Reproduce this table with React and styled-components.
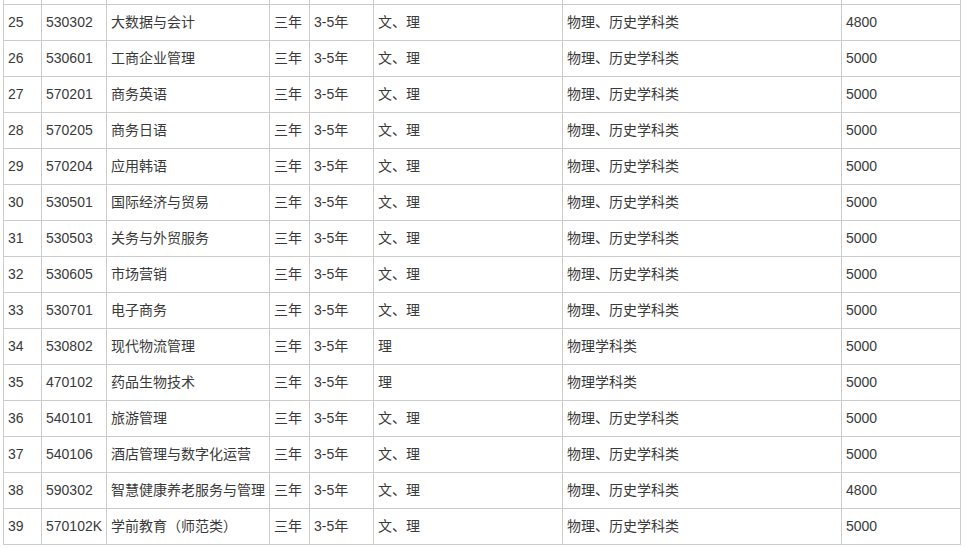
import React from 'react';
import styled, { createGlobalStyle } from 'styled-components';

const GlobalStyle = createGlobalStyle`
  html, body {
    margin: 0;
    padding: 0;
    background: #fff;
  }
  body {
    font-family: "Liberation Sans", "Noto Sans CJK SC", sans-serif;
  }
`;

// clips the row that runs off the top of the screenshot
const Viewport = styled.div`
  width: 966px;
  height: 548px;
  overflow: hidden;
  padding-left: 3px;
  box-sizing: border-box;
`;

const Table = styled.table`
  border-collapse: collapse;
  table-layout: fixed;
  width: 957px;
  margin-top: -32px;
  color: #3a3a3a;
  font-size: 14px;
`;

const Row = styled.tr`
  height: 36px;
`;

const Cell = styled.td`
  border: 1px solid #ccc;
  padding: 0 4px 2px;
  line-height: 20px;
  white-space: nowrap;
  overflow: hidden;
  vertical-align: middle;
`;

const widths = [38, 65, 163, 40, 64, 189, 279, 119];

const rows = [
  ['', '', '', '', '', '', '', ''],
  ['25', '530302', '大数据与会计', '三年', '3-5年', '文、理', '物理、历史学科类', '4800'],
  ['26', '530601', '工商企业管理', '三年', '3-5年', '文、理', '物理、历史学科类', '5000'],
  ['27', '570201', '商务英语', '三年', '3-5年', '文、理', '物理、历史学科类', '5000'],
  ['28', '570205', '商务日语', '三年', '3-5年', '文、理', '物理、历史学科类', '5000'],
  ['29', '570204', '应用韩语', '三年', '3-5年', '文、理', '物理、历史学科类', '5000'],
  ['30', '530501', '国际经济与贸易', '三年', '3-5年', '文、理', '物理、历史学科类', '5000'],
  ['31', '530503', '关务与外贸服务', '三年', '3-5年', '文、理', '物理、历史学科类', '5000'],
  ['32', '530605', '市场营销', '三年', '3-5年', '文、理', '物理、历史学科类', '5000'],
  ['33', '530701', '电子商务', '三年', '3-5年', '文、理', '物理、历史学科类', '5000'],
  ['34', '530802', '现代物流管理', '三年', '3-5年', '理', '物理学科类', '5000'],
  ['35', '470102', '药品生物技术', '三年', '3-5年', '理', '物理学科类', '5000'],
  ['36', '540101', '旅游管理', '三年', '3-5年', '文、理', '物理、历史学科类', '5000'],
  ['37', '540106', '酒店管理与数字化运营', '三年', '3-5年', '文、理', '物理、历史学科类', '5000'],
  ['38', '590302', '智慧健康养老服务与管理', '三年', '3-5年', '文、理', '物理、历史学科类', '4800'],
  ['39', '570102K', '学前教育（师范类）', '三年', '3-5年', '文、理', '物理、历史学科类', '5000'],
];

export default function App() {
  return (
    <>
      <GlobalStyle />
      <Viewport>
        <Table>
          <colgroup>
            {widths.map((w, i) => (
              <col key={i} style={{ width: w }} />
            ))}
          </colgroup>
          <tbody>
            {rows.map((r, n) => (
              <Row key={n}>
                {r.map((c, i) => (
                  <Cell key={i}>{c}</Cell>
                ))}
              </Row>
            ))}
          </tbody>
        </Table>
      </Viewport>
    </>
  );
}
